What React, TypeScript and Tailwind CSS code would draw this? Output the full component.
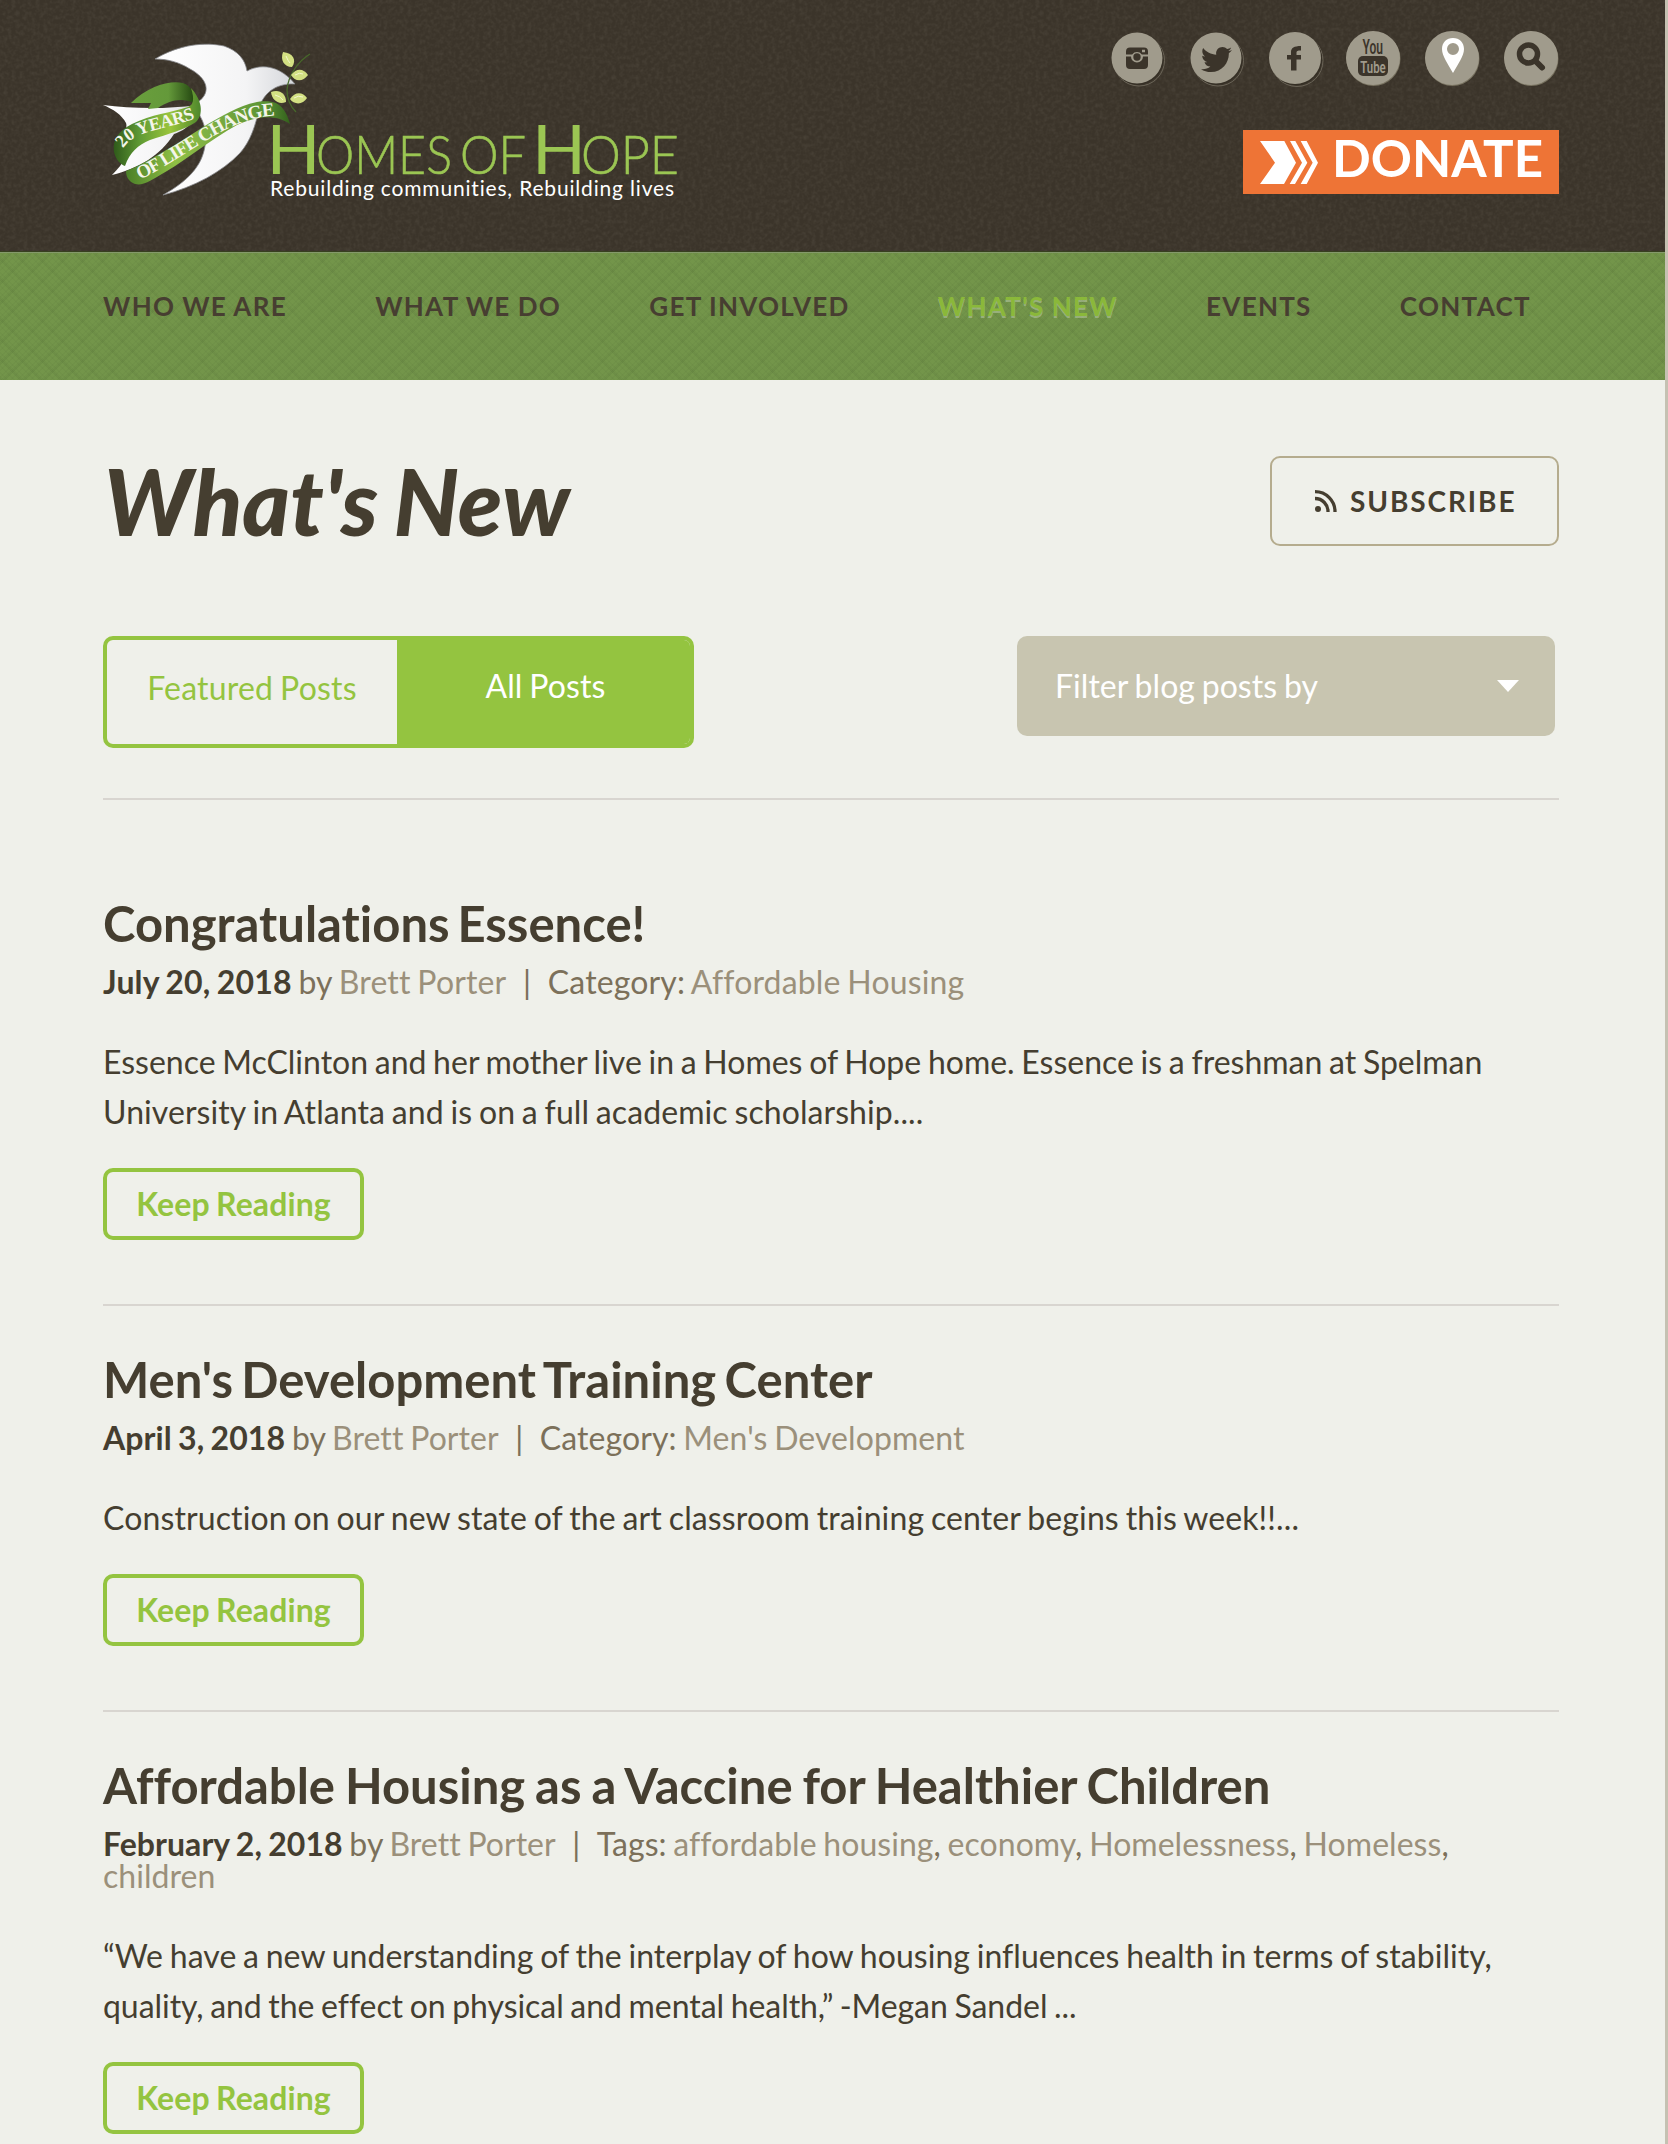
import React from "react";
import { FaTwitter } from "react-icons/fa";

function Logo() {
  return (
    <svg width="587" height="190" viewBox="103 30 587 190" className="block overflow-visible">
      <defs>
        <linearGradient id="wing" x1="0" x2="1"><stop offset="0" stopColor="#fff" /><stop offset=".65" stopColor="#f4f4f5" /><stop offset="1" stopColor="#d5d7db" /></linearGradient>
        <linearGradient id="r1" x1="0" x2="1"><stop offset="0" stopColor="#2f5a1a" /><stop offset=".3" stopColor="#5f9a34" /><stop offset=".65" stopColor="#9ac53c" /><stop offset="1" stopColor="#4d862c" /></linearGradient>
        <linearGradient id="r2" x1="0" x2="1"><stop offset="0" stopColor="#4a7f28" /><stop offset=".3" stopColor="#8fc045" /><stop offset=".5" stopColor="#7fb043" /><stop offset=".85" stopColor="#5b9334" /><stop offset="1" stopColor="#33601c" /></linearGradient>
        <linearGradient id="r3" x1="0" x2="1"><stop offset="0" stopColor="#6a9f3d" /><stop offset=".6" stopColor="#64993a" /><stop offset="1" stopColor="#264a12" /></linearGradient>
        <path id="t1" d="M123 148.500 C130 138 140 134 155 130 S180 124 199 117" />
        <path id="t2" d="M140 179.500 C155 173 168 164 198 145.500 C222 131 244 117 277 115.500" />
      </defs>
      <path d="M155 59 C180 44 205 42 224 46 C238 51 245 59 247 71 C264 62 282 68 295 84 C277 83 264 92 259 108 C256 125 250 142 240 153 C222 172 194 187 163 195 C188 181 202 166 205 146 C207 138 206 126 200 116 L198 102 C212 92 207 78 190 69 C179 62 167 59 155 59 Z" fill="url(#wing)" stroke="#85868a" strokeWidth=".8" />
      <path d="M103 105 C130 108 160 110 198 105 C196 122 186 130 174 134 C160 156 139 168 112 175 C124 163 130 152 130 140 C122 135 128 128 126 123 C122 115 113 109 103 105 Z" fill="url(#wing)" />
      <path d="M131 103 C148 86 170 80 183 83 C193 86 194 96 193 103 C182 97 168 101 158 108 L148 109 L151 103 Z" fill="url(#r3)" />
      <path d="M191 88 C195 100 193 105 188 107 C170 113 152 114 132 124 C118 131 112 141 114 152 C116 160 120 164 125 166 C130 152 138 145 150 140 C168 134 186 129 196 122 C204 114 202 100 191 88 Z" fill="url(#r1)" />
      <path d="M126 171 C145 164 180 142 203 127 C228 112 256 96 276 103 C284 107 288 116 290 124 C274 113 254 117 237 125 C210 140 186 160 167 171 C150 181 143 186 135 184 C129 182 126 177 126 171 Z" fill="url(#r2)" />
      <g fill="#f4f5ea" fontFamily="Liberation Serif" fontWeight="700">
        <text fontSize="18"><textPath href="#t1" textLength="80">20 YEARS</textPath></text>
        <text fontSize="19"><textPath href="#t2" textLength="151">OF LIFE CHANGE</textPath></text>
      </g>
      <path d="M310 54 C300 60 288 74 287 90 C287 100 291 107 296 112" fill="none" stroke="#47692a" strokeWidth="1.300" />
      <g fill="#d3e083">
        <path d="M283 52 C293 53 297 60 292 67 C284 67 280 60 283 52 Z" />
        <path d="M291 75 C297 67 304 69 308 75 C303 82 295 82 291 75 Z" />
        <path d="M271 92 C279 89 286 93 286 102 C278 105 272 100 271 92 Z" />
        <path d="M290 99 C295 91 303 92 307 98 C303 105 294 105 290 99 Z" />
      </g>
      <path d="M286 56 q2 5 4 7M295 75 q5-3 8-1M275 95 q5 1 8 5M294 98 q4-3 9-1" fill="none" stroke="#f2f6cc" />
      <g fill="#9bc653" fontFamily="Lato">
        <text x="266.500" y="174" fontSize="67" textLength="54" lengthAdjust="spacingAndGlyphs">H</text>
        <text x="316" y="174" fontSize="54" fontWeight="300" stroke="#9bc653" strokeWidth=".6" textLength="136" lengthAdjust="spacingAndGlyphs">OMES</text>
        <text x="460" y="174" fontSize="54" fontWeight="300" stroke="#9bc653" strokeWidth=".6" textLength="66" lengthAdjust="spacingAndGlyphs">OF</text>
        <text x="532" y="174" fontSize="67" textLength="54" lengthAdjust="spacingAndGlyphs">H</text>
        <text x="581" y="174" fontSize="54" fontWeight="300" stroke="#9bc653" strokeWidth=".6" textLength="98" lengthAdjust="spacingAndGlyphs">OPE</text>
      </g>
      <text x="270" y="196" fill="#fff" fontFamily="Lato" fontSize="21" textLength="404" className="[font-variant-ligatures:none]">Rebuilding communities, Rebuilding lives</text>
    </svg>
  );
}

function Disc({ r, children }: { r: number; children: React.ReactNode }) {
  return (
    <svg width="54" height="58" viewBox="-27 -27 54 58" className="block overflow-visible">
      {r < 27 && <circle cx="2" cy="2.500" r={r} fill="none" stroke="#6b6558" strokeWidth="1" />}
      {r < 27 && <circle cx="1" cy="1.200" r={r} fill="#352f25" />}
      {r === 27 && <circle cx=".5" cy="1" r={r} fill="#77715f" />}
      <circle r={r} fill="#a09b8c" />
      {children}
    </svg>
  );
}

function SocialRow() {
  const dark = "#3b342a";
  return (
    <div className="mr-px flex w-[448px] justify-between">
      <Disc r={25.5}>
        <path fill={dark} fillRule="evenodd" d="M-7-10.500H7A4 4 0 0 1 11-6.500V-3.500H4.800A6 6 0 0 0-4.800-3.500H-11V-6.500A4 4 0 0 1-7-10.500ZM5-8.300V-5.800H8V-8.300ZM-11-1.500H-6A6 6 0 1 0 6-1.500H11V7A4 4 0 0 1 7 11H-7A4 4 0 0 1-11 7Z" />
        <circle cy="-1" r="3.700" fill={dark} />
      </Disc>
      <Disc r={25.5}><FaTwitter x={-15} y={-14} size={31} color={dark} /></Disc>
      <Disc r={26}><path fill={dark} d="M-4 12.500V1.500H-8V-3H-4V-6C-4-10-1-12 6-12V-7.500C2.500-7.500 1.500-7.200 1.500-5V-3H6V1.500H1.500V12.500Z" /></Disc>
      <Disc r={27}>
        <text x="-10.500" y="-4.500" fill={dark} fontFamily="Roboto" fontWeight="600" fontSize="19.500" textLength="20.500" lengthAdjust="spacingAndGlyphs">You</text>
        <rect x="-15" y="-2" width="30" height="20" rx="5" fill={dark} />
        <text x="-12.800" y="14.500" fill="#a09b8c" fontFamily="Roboto" fontWeight="600" fontSize="17" textLength="25.500" lengthAdjust="spacingAndGlyphs">Tube</text>
      </Disc>
      <Disc r={27}>
        <path fill="#fff" fillRule="evenodd" d="M1-20C7.500-20 12-15.500 12-9C12-2 6 6 1 15C-4 6-10-2-10-9C-10-15.500-5.500-20 1-20ZM1-15A6 6 0 1 0 1-3A6 6 0 1 0 1-15Z" />
      </Disc>
      <Disc r={27}>
        <circle cx="-2.500" cy="-4" r="9" fill="none" stroke={dark} strokeWidth="5.500" />
        <path d="M4.500 3 L11 9.500" stroke={dark} strokeWidth="6" strokeLinecap="round" />
      </Disc>
    </div>
  );
}

const nav = ["WHO WE ARE", "WHAT WE DO", "GET INVOLVED", "WHAT'S NEW", "EVENTS", "CONTACT"];

type Line = { text: string; fit: string };
type Post = { title: string; titleFit: string; date: string; metaFit: string; label: string; tags: string[]; body: Line[] };
const posts: Post[] = [
  {
    title: "Congratulations Essence!",
    titleFit: "[word-spacing:-4px]",
    date: "July 20, 2018",
    metaFit: "tracking-[0.14px]",
    label: "Category:",
    tags: ["Affordable Housing"],
    body: [
      { text: "Essence McClinton and her mother live in a Homes of Hope home. Essence is a freshman at Spelman", fit: "tracking-normal" },
      { text: "University in Atlanta and is on a full academic scholarship....", fit: "tracking-[0.08px]" },
    ],
  },
  {
    title: "Men's Development Training Center",
    titleFit: "[word-spacing:-3.5px]",
    date: "April 3, 2018",
    metaFit: "tracking-[0.07px]",
    label: "Category:",
    tags: ["Men's Development"],
    body: [{ text: "Construction on our new state of the art classroom training center begins this week!!...", fit: "tracking-[0.12px]" }],
  },
  {
    title: "Affordable Housing as a Vaccine for Healthier Children",
    titleFit: "[word-spacing:-2px]",
    date: "February 2, 2018",
    metaFit: "tracking-[0.04px]",
    label: "Tags:",
    tags: ["affordable housing", "economy", "Homelessness", "Homeless", "children"],
    body: [
      { text: "“We have a new understanding of the interplay of how housing influences health in terms of stability,", fit: "tracking-[0.04px]" },
      { text: "quality, and the effect on physical and mental health,” -Megan Sandel ...", fit: "tracking-[-0.05px]" },
    ],
  },
];

function PostItem({ post, first }: { post: Post; first: boolean }) {
  return (
    <article className={first ? "border-t-2 border-[#d8d5d0] pt-[94px] pb-16" : "border-t-2 border-[#d8d5d0] pt-11 pb-16"}>
      <h2 className={"text-[49px] leading-[58px] font-bold " + post.titleFit}>{post.title}</h2>
      <p className={"mt-[14px] pr-5 text-[32px] leading-8 text-[#7c705a] " + post.metaFit}>
        <strong className="font-bold text-[#453e30]">{post.date}</strong> by <a className="text-[#9b907b]">Brett Porter</a>
        <span className="[word-spacing:0]"> &nbsp;|&nbsp; </span>{post.label}{" "}
        {post.tags.map((t, i) => (
          <React.Fragment key={t}>{i > 0 && ", "}<a className="text-[#9b907b]">{t}</a></React.Fragment>
        ))}
      </p>
      <p className="mt-[39px] text-[32px] leading-[50px]">
        {post.body.map((l) => <span key={l.text} className={"block whitespace-nowrap " + l.fit}>{l.text}</span>)}
      </p>
      <a className="mt-[31px] flex h-[72px] w-[261px] items-center justify-center rounded-[10px] border-4 border-[#94c440] text-[32px] leading-none font-bold tracking-[0.1px] text-[#94c440]">Keep Reading</a>
    </article>
  );
}

export default function App() {
  return (
    <div className="h-[2144px] w-[1668px] overflow-hidden border-r-[3px] border-[#c5c1b2] bg-[#eff0ea] font-['Lato',sans-serif] text-[#453e30] [font-variant-ligatures:none]">
      <header className="relative h-[252px] border-b border-[#37401f] bg-[#3b342a]">
        <svg className="absolute inset-0 h-full w-full opacity-15" aria-hidden="true">
          <filter id="grain"><feTurbulence type="fractalNoise" baseFrequency=".25" numOctaves="3" seed="4" /><feColorMatrix values="0 0 0 0 .5  0 0 0 0 .46  0 0 0 0 .38  1.2 0 0 0 -.45" /></filter>
          <rect width="100%" height="100%" filter="url(#grain)" />
        </svg>
        <div className="relative flex justify-between pr-[106px] pl-[103px]">
          <div className="pt-[30px]"><Logo /></div>
          <div className="flex flex-col items-end pt-[31px]">
            <SocialRow />
            <a className="mt-[41px] flex h-16 w-[316px] items-start bg-[#ee7436] pl-[17px] text-white">
              <svg width="58" height="43" viewBox="510 363 174 129" className="mt-[11px]" fill="currentColor">
                <path d="M510 363H583L618 428L582 492H510L555 428ZM600 363H616L652 428L615 492H599L636 428ZM632 363H650L684 428L650 492H632L668 428Z" />
              </svg>
              <span className="-mt-[2px] ml-[14px] text-[51px] leading-[60px] font-bold">DONATE</span>
            </a>
          </div>
        </div>
      </header>
      <nav className="flex h-32 gap-[88.2px] border-t border-[#84996a] bg-[#73954a] bg-[repeating-linear-gradient(45deg,rgba(60,80,40,0.05)_0_1.5px,transparent_1.5px_4.714px),repeating-linear-gradient(-45deg,rgba(60,80,40,0.05)_0_1.5px,transparent_1.5px_4.714px),repeating-linear-gradient(45deg,rgba(60,80,40,0.05)_0_3px,transparent_3px_14.142px),repeating-linear-gradient(-45deg,rgba(60,80,40,0.05)_0_3px,transparent_3px_14.142px)] pt-[37px] pl-[103px] text-[26px] leading-8 font-bold tracking-[1.3px] [word-spacing:-0.5px]">
        {nav.map((n) => (
          <a key={n} className={n === "WHAT'S NEW" ? "whitespace-nowrap text-[#8ab83a] [text-shadow:0_2px_0_rgba(255,255,255,0.3)]" : "whitespace-nowrap text-[#473e31]"}>{n}</a>
        ))}
      </nav>
      <main className="pr-[106px] pl-[103px] [word-spacing:-1.5px]">
        <div className="flex items-start justify-between pt-[76px]">
          <h1 className="pl-px text-[91px] leading-[90px] font-black italic [word-spacing:-4px]">What's New</h1>
          <a className="flex h-[90px] w-[289px] items-center rounded-[10px] border-2 border-[#b5ac8e] pl-[43px] text-[28px] font-bold tracking-[1.9px]">
            <svg width="22" height="22" viewBox="0 0 22 22" className="mr-[13px] shrink-0" fill="none" stroke="currentColor" strokeWidth="3.300">
              <circle cx="3" cy="19" r="3" fill="currentColor" stroke="none" />
              <path d="M0 8.500A13 13 0 0 1 13 22M0 1.700A20 20 0 0 1 20 22" />
            </svg>
            SUBSCRIBE
          </a>
        </div>
        <div className="mt-[90px] flex items-start justify-between pr-1 text-[32px]">
          <div className="flex h-28 w-[591px] overflow-hidden rounded-[10px] border-4 border-[#94c440] leading-[96px]">
            <a className="w-[290px] text-center tracking-[0.2px] text-[#94c440]">Featured Posts</a>
            <a className="flex-1 bg-[#94c440] pl-1 text-center leading-[92px] tracking-[0.1px] text-white">All Posts</a>
          </div>
          <div className="flex h-[100px] w-[538px] items-center justify-between rounded-[10px] bg-[#c8c5b0] pr-9 pl-[38px] text-white">
            <span className="tracking-[0.05px]">Filter blog posts by</span>
            <svg width="22" height="12" viewBox="0 0 22 12" fill="currentColor"><path d="M0 0H22L11 12Z" /></svg>
          </div>
        </div>
        <div className="mt-[50px]">
          {posts.map((p, i) => <PostItem key={p.title} post={p} first={i === 0} />)}
        </div>
      </main>
    </div>
  );
}
